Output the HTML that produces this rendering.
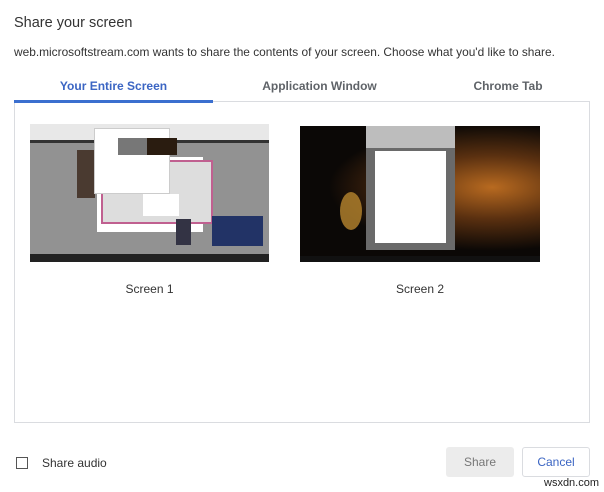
<!DOCTYPE html>
<html><head><meta charset="utf-8"><style>
*{margin:0;padding:0;box-sizing:border-box}
body{width:604px;height:492px;background:#fff;font-family:"Liberation Sans",sans-serif;position:relative;overflow:hidden;color:#202124}
.a{position:absolute}
</style></head><body>
<div class="a" style="left:14px;top:15px;font-size:14.5px;color:#333">Share your screen</div>
<div class="a" style="left:14px;top:45px;font-size:11.9px;color:#333">web.microsoftstream.com wants to share the contents of your screen. Choose what you'd like to share.</div>
<div class="a" style="left:14px;top:79px;width:199px;text-align:center;font-size:12px;font-weight:bold;color:#3b65c3">Your Entire Screen</div>
<div class="a" style="left:213px;top:79px;width:213px;text-align:center;font-size:12px;font-weight:bold;color:#5f6368">Application Window</div>
<div class="a" style="left:426px;top:79px;width:164px;text-align:center;font-size:12px;font-weight:bold;color:#5f6368">Chrome Tab</div>
<div class="a" style="left:14px;top:101px;width:576px;height:322px;border:1px solid #dadce0"></div>
<div class="a" style="left:14px;top:100px;width:199px;height:3px;background:#3b6fcf"></div>
<div class="a" style="left:30px;top:124px;width:239px;height:138px;background:#929292;overflow:hidden">
 <div class="a" style="left:0;top:0;width:239px;height:16px;background:#e8e8e8"></div>
 <div class="a" style="left:0;top:16px;width:239px;height:3px;background:#333"></div>
 <div class="a" style="left:47px;top:26px;width:18px;height:48px;background:#4a3a30"></div>
 <div class="a" style="left:67px;top:33px;width:106px;height:75px;background:#fff"></div>
 <div class="a" style="left:71px;top:36px;width:112px;height:64px;border:2px solid #c06090;background:#ddd"></div>
 <div class="a" style="left:64px;top:4px;width:76px;height:66px;background:#fff;border:1px solid #ccc"></div>
 <div class="a" style="left:88px;top:14px;width:30px;height:17px;background:#777"></div>
 <div class="a" style="left:117px;top:14px;width:30px;height:17px;background:#2a1c10"></div>
 <div class="a" style="left:113px;top:70px;width:36px;height:22px;background:#fff"></div>
 <div class="a" style="left:182px;top:92px;width:51px;height:30px;background:#223366"></div>
 <div class="a" style="left:146px;top:95px;width:15px;height:26px;background:#334"></div>
 <div class="a" style="left:0;top:130px;width:239px;height:8px;background:#222"></div>
</div>
<div class="a" style="left:300px;top:126px;width:240px;height:136px;background:radial-gradient(ellipse at 80% 45%,#b86a20 0,#5a3010 30%,#0b0806 60%),#000;overflow:hidden">
 <div class="a" style="left:40px;top:66px;width:22px;height:38px;border-radius:50%;background:#b8862e;opacity:.8"></div>
 <div class="a" style="left:66px;top:0;width:89px;height:124px;background:#6a6a6a"></div>
 <div class="a" style="left:66px;top:0;width:89px;height:22px;background:#bdbdbd"></div>
 <div class="a" style="left:75px;top:25px;width:71px;height:92px;background:#fff"></div>
 <div class="a" style="left:0;top:130px;width:240px;height:6px;background:#111"></div>
</div>
<div class="a" style="left:30px;top:282px;width:239px;text-align:center;font-size:12px;color:#333">Screen 1</div>
<div class="a" style="left:300px;top:282px;width:240px;text-align:center;font-size:12px;color:#333">Screen 2</div>
<div class="a" style="left:16px;top:457px;width:12px;height:12px;border:1.5px solid #555"></div>
<div class="a" style="left:42px;top:456px;font-size:12px;color:#333">Share audio</div>
<div class="a" style="left:446px;top:447px;width:68px;height:30px;background:#ececec;border-radius:3px;text-align:center;line-height:30px;font-size:12px;color:#777">Share</div>
<div class="a" style="left:522px;top:447px;width:68px;height:30px;border:1px solid #dadce0;border-radius:3px;text-align:center;line-height:28px;font-size:12px;color:#3b65c3">Cancel</div>
<div class="a" style="left:544px;top:477px;font-size:11px;color:#222;background:#fff">wsxdn.com</div>
</body></html>
